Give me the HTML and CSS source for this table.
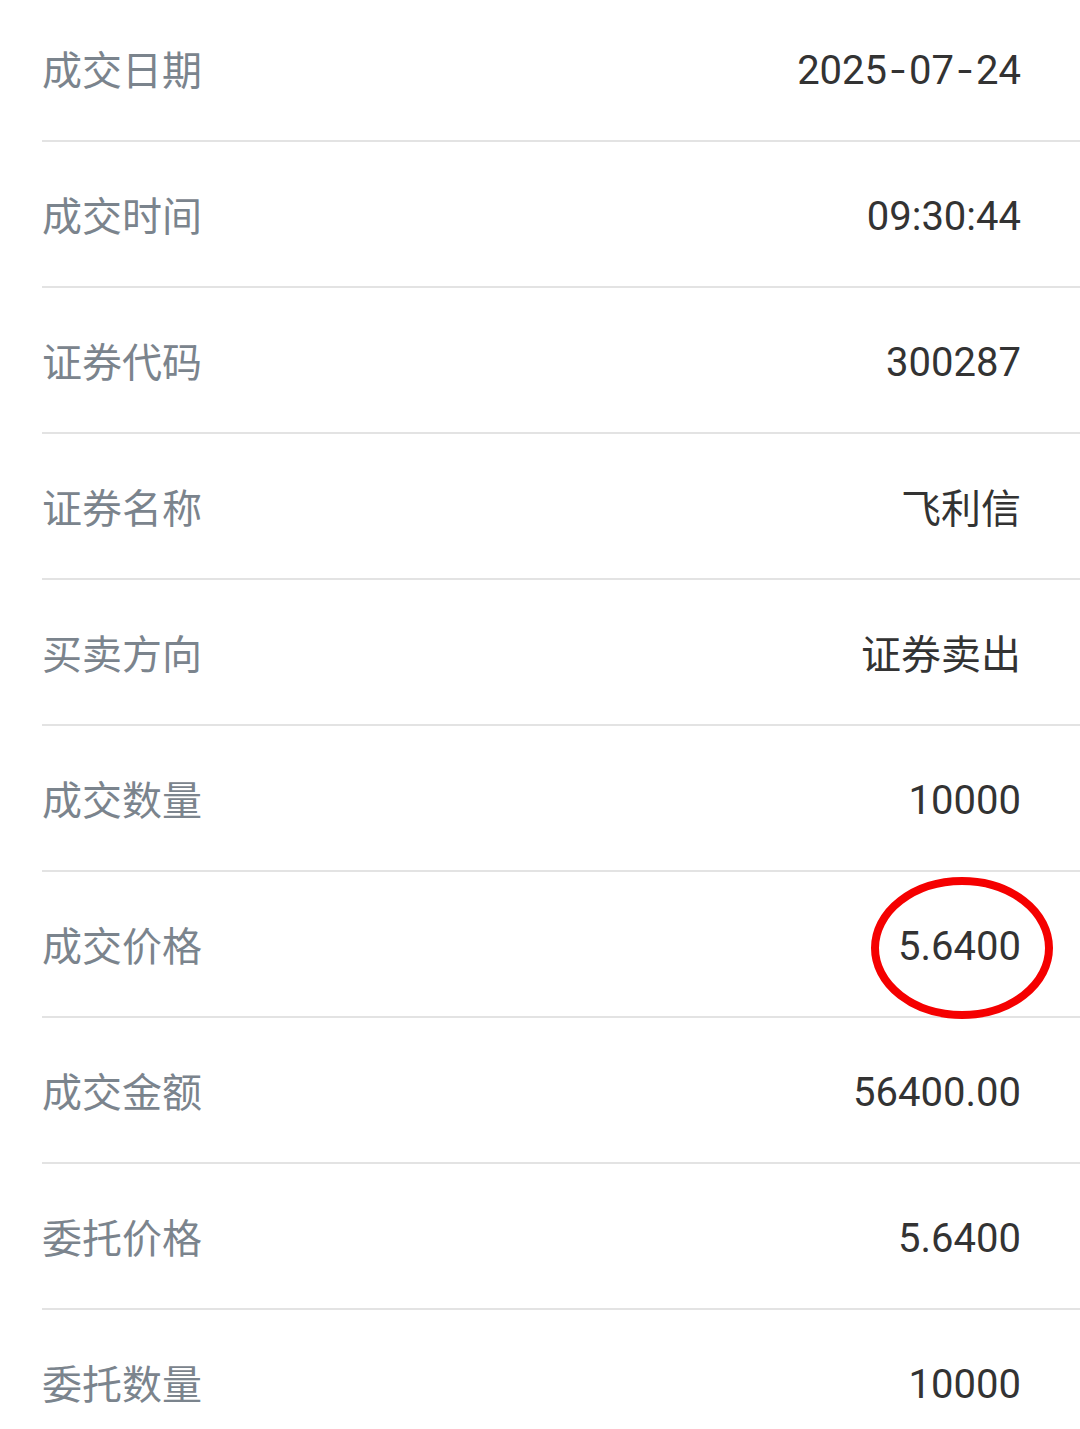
FILE: index.html
```html
<!DOCTYPE html>
<html lang="zh-CN">
<head>
<meta charset="utf-8">
<link rel="stylesheet" href="styles.css">
</head>
<body>
<div class="list">
  <div class="row"><span class="label">成交日期</span><span class="value num">2025<span class="dash">-</span>07<span class="dash">-</span>24</span></div>
  <div class="row"><span class="label">成交时间</span><span class="value num">09:30:44</span></div>
  <div class="row"><span class="label">证券代码</span><span class="value num">300287</span></div>
  <div class="row"><span class="label">证券名称</span><span class="value">飞利信</span></div>
  <div class="row"><span class="label">买卖方向</span><span class="value">证券卖出</span></div>
  <div class="row"><span class="label">成交数量</span><span class="value num">10000</span></div>
  <div class="row"><span class="label">成交价格</span><span class="value num circled">5.6400<svg class="ring" width="190" height="150" viewBox="0 0 190 150"><ellipse cx="95" cy="75" rx="87" ry="67" fill="none" stroke="#f50000" stroke-width="8"/></svg></span></div>
  <div class="row"><span class="label">成交金额</span><span class="value num">56400.00</span></div>
  <div class="row"><span class="label">委托价格</span><span class="value num">5.6400</span></div>
  <div class="row"><span class="label">委托数量</span><span class="value num">10000</span></div>
</div>
</body>
</html>
```
FILE: styles.css
```css
html, body {
  margin: 0;
  padding: 0;
  background: #ffffff;
}
body {
  width: 1080px;
  height: 1429px;
  overflow: hidden;
  font-family: Roboto, "Noto Sans CJK SC", sans-serif;
}
.list {
  margin-top: -4px;
  margin-left: 42px;
}
.row {
  display: flex;
  align-items: center;
  justify-content: space-between;
  height: 144px;
  padding-right: 59px;
  border-bottom: 2px solid #e3e3e3;
}
.label {
  font-family: "Noto Sans CJK SC", sans-serif;
  font-size: 40px;
  color: #7b848d;
}
.value {
  font-size: 40px;
  color: #333333;
  font-family: Roboto, "Noto Sans CJK SC", sans-serif;
}
.num {
  padding-top: 4px;
}
.dash {
  display: inline-block;
  width: 22px;
  text-align: center;
  transform: scaleX(1.3);
}
.circled {
  position: relative;
}
.ring {
  position: absolute;
  left: -31px;
  top: -46px;
  pointer-events: none;
}
```
